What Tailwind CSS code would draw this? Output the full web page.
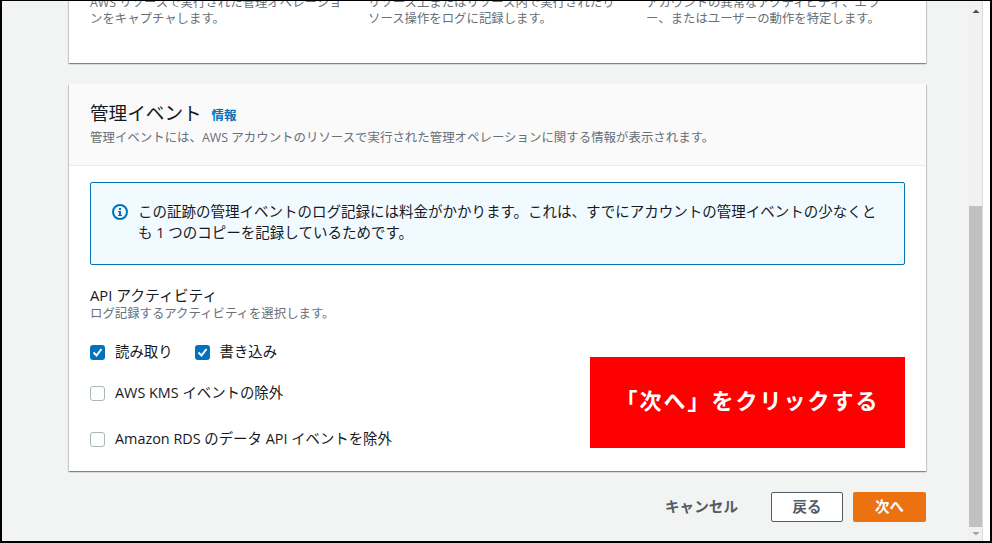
<!DOCTYPE html>
<html lang="ja">
  <head>
    <meta charset="UTF-8" />
    <title>管理イベント</title>
    <script src="https://cdn.jsdelivr.net/npm/@tailwindcss/browser@4"></script>
  </head>

  <body class="h-[543px] w-[992px] overflow-hidden bg-white font-['Open_Sans','Noto_Sans_CJK_JP',sans-serif]">
    <div class="flex h-full border-t border-r-2 border-b-2 border-l-2 border-black">
      <!-- Page -->
      <main class="relative flex-1 min-w-0 h-full overflow-hidden bg-[#f2f3f3] pl-[67px] pr-[43px]">
        <!-- Previous card, scrolled off the top -->
        <section class="-mt-[6px] h-[68px] bg-white shadow-[0_1px_1px_0_rgba(0,28,36,0.3),1px_1px_1px_0_rgba(0,28,36,0.15),-1px_1px_1px_0_rgba(0,28,36,0.15)]">
          <div class="flex gap-[26px] pl-[21px] text-[12.4px] leading-[16px] whitespace-nowrap text-[#687078]">
            <p class="w-[252px]">AWS リソースで実行された管理オペレーショ<br />ンをキャプチャします。</p>
            <p class="w-[252px]">リソース上またはリソース内で実行されたり<br />ソース操作をログに記録します。</p>
            <p class="w-[235px]">アカウントの異常なアクティビティ、エラ<br />ー、またはユーザーの動作を特定します。</p>
          </div>
        </section>

        <!-- Management events card -->
        <section class="mt-[21px] h-[387px] bg-white shadow-[0_1px_1px_0_rgba(0,28,36,0.3),1px_1px_1px_0_rgba(0,28,36,0.15),-1px_1px_1px_0_rgba(0,28,36,0.15)]">
          <header class="h-[82px] border-b border-[#eaeded] bg-[#fafafa] pl-[21px] pt-[16px]">
            <div class="flex items-baseline gap-[10px]">
              <h2 class="text-[18.6px] leading-[26px] text-[#16191f]">管理イベント</h2>
              <a class="text-[12.5px] font-bold text-[#0073bb]">情報</a>
            </div>
            <p class="mt-[4px] text-[12.45px] leading-[16px] text-[#687078]">管理イベントには、AWS アカウントのリソースで実行された管理オペレーションに関する情報が表示されます。</p>
          </header>

          <div class="pl-[21px] pr-[21px] pt-[16px]">
            <!-- Info alert -->
            <div class="flex h-[83px] gap-[10px] rounded-[2px] border border-[#0073bb] bg-[#f1faff] pl-[21px] pr-[20px] pt-[18px]">
              <svg class="mt-[3px] h-[16px] w-[16px] shrink-0" viewBox="0 0 16 16" fill="none">
                <circle cx="8" cy="8" r="7" stroke="#0073bb" stroke-width="2" />
                <rect x="7" y="7" width="2" height="4.5" fill="#0073bb" />
                <rect x="7" y="4" width="2" height="2" fill="#0073bb" />
                <rect x="6" y="7" width="2" height="1" fill="#0073bb" />
                <rect x="6" y="11" width="4" height="1" fill="#0073bb" />
              </svg>
              <p class="text-[14.5px] leading-[21px] text-[#16191f]">この証跡の管理イベントのログ記録には料金がかかります。これは、すでにアカウントの管理イベントの少なくとも 1 つのコピーを記録しているためです。</p>
            </div>

            <!-- API activity -->
            <div class="mt-[22px] text-[14.8px] leading-[17px] text-[#16191f]">API アクティビティ</div>
            <div class="mt-[2px] text-[12.4px] leading-[16px] text-[#687078]">ログ記録するアクティビティを選択します。</div>

            <div class="mt-[20px] flex gap-[22px]">
              <label class="flex items-center gap-[10px] text-[14.4px] leading-[20px] text-[#16191f]">
                <span class="flex h-[15px] w-[15px] items-center justify-center rounded-[3px] bg-[#0073bb]">
                  <svg class="h-[15px] w-[15px]" viewBox="0 0 15 15" fill="none"><path d="M3.5 7.5l3 3 5-6.500" stroke="#fff" stroke-width="2" /></svg>
                </span>
                読み取り
              </label>
              <label class="flex items-center gap-[10px] text-[14.4px] leading-[20px] text-[#16191f]">
                <span class="flex h-[15px] w-[15px] items-center justify-center rounded-[3px] bg-[#0073bb]">
                  <svg class="h-[15px] w-[15px]" viewBox="0 0 15 15" fill="none"><path d="M3.5 7.5l3 3 5-6.500" stroke="#fff" stroke-width="2" /></svg>
                </span>
                書き込み
              </label>
            </div>

            <label class="mt-[21px] flex items-center gap-[10px] text-[14.4px] leading-[20px] text-[#16191f]">
              <span class="h-[15px] w-[15px] rounded-[3px] border border-[#aab7b8] bg-white"></span>
              AWS KMS イベントの除外
            </label>
            <label class="mt-[26px] flex items-center gap-[10px] text-[14.4px] leading-[20px] text-[#16191f]">
              <span class="h-[15px] w-[15px] rounded-[3px] border border-[#aab7b8] bg-white"></span>
              Amazon RDS のデータ API イベントを除外
            </label>
          </div>
        </section>

        <!-- Wizard actions -->
        <div class="mt-[21px] flex items-center justify-end">
          <button class="mr-[33px] text-[14.6px] font-bold text-[#545b64]">キャンセル</button>
          <button class="mr-[10px] h-[30px] w-[72px] rounded-[2px] border border-[#545b64] bg-white text-[14.4px] font-bold text-[#545b64]">戻る</button>
          <button class="h-[30px] w-[73px] rounded-[2px] bg-[#ec7211] text-[14.4px] font-bold text-white">次へ</button>
        </div>

        <!-- Annotation over the screenshot -->
        <div class="absolute left-[588px] top-[356px] flex h-[91px] w-[315px] items-center justify-center bg-[#ff0000] pb-[4px] text-[22px] font-bold tracking-[2px] text-white">「次へ」をクリックする</div>
      </main>

      <!-- Scrollbar -->
      <div class="flex h-full w-[14px] shrink-0 flex-col items-center border-r border-[#d9dcdc] bg-[#f1f1f1]">
        <svg class="mt-[4px] h-[12px] w-[12px]" viewBox="0 0 12 12"><path d="M2.5 8L6 4.5 9.500 8z" fill="#505050" /></svg>
        <div class="mt-[189px] h-[321px] w-full bg-[#c1c1c1]"></div>
        <svg class="mt-[1px] h-[12px] w-[12px]" viewBox="0 0 12 12"><path d="M2.500 4L6 7.500 9.500 4z" fill="#a3a3a3" /></svg>
      </div>
      <div class="h-full w-[7px] shrink-0 bg-white"></div>
    </div>
  </body>
</html>
